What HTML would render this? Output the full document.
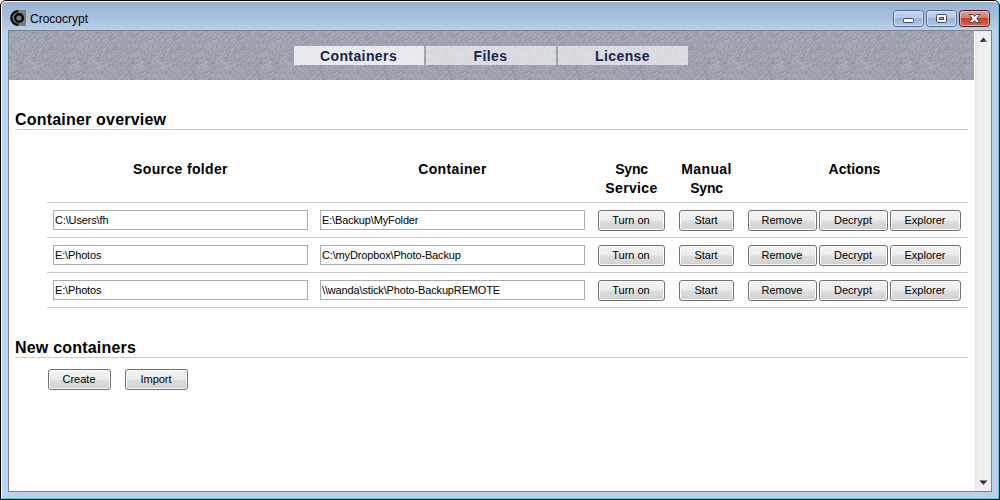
<!DOCTYPE html>
<html>
<head>
<meta charset="utf-8">
<title>Crococrypt</title>
<style>
html,body{margin:0;padding:0;}
body{width:1000px;height:500px;overflow:hidden;background:#fff;font-family:"Liberation Sans",sans-serif;position:relative;}
.abs{position:absolute;}
#frame{left:0;top:0;width:998px;height:498px;border:1px solid #000;border-radius:6px 6px 0 0;background:linear-gradient(to bottom,#98b3d1 0px,#a4bedb 14px,#b9d1ea 30px,#b9d1ea 100%);overflow:hidden;}
#frame .hl{left:0;top:0;width:996px;height:496px;border-top:1px solid #fff;border-left:1px solid #fff;border-right:1px solid #3fd6ee;border-bottom:1px solid #3fd6ee;border-radius:5px 5px 0 0;}
#title{left:30px;top:12px;font-size:12px;line-height:14px;color:#000;white-space:pre;}
#client{left:8px;top:30px;width:984px;height:462px;background:#fff;border:1px solid #7c7f8c;}
#hdr{left:9px;top:31px;width:965px;height:49px;background:#9ea1ae;}
.tab{top:46px;height:19px;width:130px;background:rgba(255,255,255,0.62);color:#14264f;font-weight:bold;font-size:14px;letter-spacing:0.4px;line-height:21px;text-align:center;text-indent:-1px;}
.tab.sel{background:rgba(255,255,255,0.78);}
h2{margin:0;font-size:16px;font-weight:bold;letter-spacing:0.2px;line-height:18px;color:#000;white-space:pre;}
.hr{height:1px;background:#c9c9c9;}
.th{font-weight:bold;font-size:14px;letter-spacing:0.35px;line-height:19px;text-align:center;color:#000;top:160px;}
.inp{height:18px;border:1px solid #a9abb3;background:#fff;font-size:11px;line-height:18px;color:#000;white-space:pre;padding-left:1px;letter-spacing:-0.15px;box-sizing:content-box;}
.btn{height:19px;border:1px solid #707070;border-radius:3px;box-shadow:inset 0 0 0 1px #fcfcfc;background:linear-gradient(to bottom,#f3f3f3 0%,#ececec 48%,#dedede 52%,#d0d0d0 100%);font-size:11px;line-height:19px;text-align:center;color:#000;white-space:pre;text-indent:-1px;}
#sb{left:974px;top:31px;width:17px;height:460px;background:linear-gradient(to right,#fdfdfd 0,#fdfdfd 1px,#e5e5e5 1px,#ececec 3px,#efefef 6px,#f0f0f0 17px);}
</style>
</head>
<body>
<div id="frame" class="abs"><div class="hl abs"></div></div>

<!-- title icon -->
<svg class="abs" style="left:10px;top:10px" width="16" height="16" viewBox="0 0 16 16">
  <rect x="7" y="0" width="9" height="16" fill="#7f7d7b"/>
  <circle cx="8" cy="8" r="7" fill="#7f7d7b"/>
  <path d="M8.2 1.1 A6.9 6.9 0 0 0 8.2 14.9" fill="none" stroke="#000" stroke-width="2.2"/>
  <circle cx="9" cy="8" r="3.8" fill="none" stroke="#000" stroke-width="2.4"/>
</svg>
<div id="title" class="abs">Crococrypt</div>

<!-- caption buttons -->
<svg class="abs" style="left:890px;top:8px" width="104" height="22" viewBox="890 8 104 22">
<defs>
<linearGradient id="gb" x1="0" y1="0" x2="0" y2="1">
<stop offset="0" stop-color="#c3d6ee"/><stop offset="0.47" stop-color="#b4cbe7"/><stop offset="0.5" stop-color="#98b5d8"/><stop offset="1" stop-color="#aecaea"/>
</linearGradient>
<linearGradient id="gr" x1="0" y1="0" x2="0" y2="1">
<stop offset="0" stop-color="#e8a494"/><stop offset="0.47" stop-color="#d8796a"/><stop offset="0.5" stop-color="#c4432d"/><stop offset="1" stop-color="#d4664e"/>
</linearGradient>
</defs>
<!-- minimize -->
<rect x="893.5" y="10.5" width="30" height="16" rx="3" fill="url(#gb)" stroke="#55688a"/>
<rect x="894.5" y="11.5" width="28" height="14" rx="2" fill="none" stroke="#dbe8f7" stroke-opacity="0.85"/>
<rect x="903.5" y="18.5" width="10" height="4" rx="1" fill="#fbfbfb" stroke="#454b5c"/>
<!-- maximize -->
<rect x="926.5" y="10.5" width="30" height="16" rx="3" fill="url(#gb)" stroke="#55688a"/>
<rect x="927.5" y="11.5" width="28" height="14" rx="2" fill="none" stroke="#dbe8f7" stroke-opacity="0.85"/>
<rect x="936.5" y="14.5" width="10" height="8" rx="1" fill="#fbfbfb" stroke="#454b5c"/>
<rect x="939.5" y="17.5" width="4" height="2" fill="#9db8d8" stroke="#454b5c"/>
<!-- close -->
<rect x="959.5" y="10.5" width="30" height="16" rx="3" fill="url(#gr)" stroke="#4b1a26"/>
<rect x="960.5" y="11.5" width="28" height="14" rx="2" fill="none" stroke="#f3c0b4" stroke-opacity="0.8"/>
<path d="M969 14.5H972.7L974.5 16.4 976.3 14.5H980L976.7 18.5 980 22.5H976.3L974.5 20.6 972.7 22.5H969L972.3 18.5z" fill="#fbfbfb" stroke="#454b5c" stroke-width="1" stroke-linejoin="round"/>
</svg>

<div id="client" class="abs" style="box-sizing:border-box"></div>
<svg class="abs" style="left:9px;top:31px" width="965" height="49"><defs><pattern id="tx" width="64" height="52" patternUnits="userSpaceOnUse"><rect width="64" height="52" fill="#9ea1ae"/><path fill="#aeb1be" d="M0 0h1v1h-1zM8 0h1v1h-1zM11 0h1v1h-1zM13 0h1v1h-1zM22 0h1v1h-1zM31 0h1v1h-1zM54 0h1v1h-1zM56 0h1v1h-1zM60 0h2v1h-2zM63 0h1v1h-1zM5 1h1v1h-1zM7 1h1v1h-1zM12 1h1v1h-1zM15 1h1v1h-1zM35 1h1v1h-1zM40 1h1v1h-1zM51 1h1v1h-1zM55 1h1v1h-1zM63 1h1v1h-1zM3 2h1v1h-1zM14 2h1v1h-1zM34 2h1v1h-1zM36 2h1v1h-1zM39 2h1v1h-1zM50 2h1v1h-1zM5 3h1v1h-1zM13 3h2v1h-2zM19 3h1v1h-1zM21 3h1v1h-1zM33 3h1v1h-1zM38 3h1v1h-1zM41 3h2v1h-2zM49 3h1v1h-1zM53 3h1v1h-1zM58 3h1v1h-1zM2 4h3v1h-3zM9 4h1v1h-1zM12 4h1v1h-1zM16 4h1v1h-1zM20 4h1v1h-1zM28 4h2v1h-2zM40 4h1v1h-1zM53 4h1v1h-1zM0 5h1v1h-1zM7 5h1v1h-1zM13 5h1v1h-1zM23 5h2v1h-2zM28 5h1v1h-1zM33 5h1v1h-1zM52 5h1v1h-1zM12 6h1v1h-1zM18 6h1v1h-1zM22 6h1v1h-1zM30 6h1v1h-1zM47 6h1v1h-1zM54 6h3v1h-3zM63 6h1v1h-1zM1 7h1v1h-1zM13 7h1v1h-1zM21 7h1v1h-1zM33 7h1v1h-1zM42 7h1v1h-1zM52 7h1v1h-1zM57 7h1v1h-1zM4 8h1v1h-1zM20 8h1v1h-1zM25 8h2v1h-2zM32 8h1v1h-1zM47 8h1v1h-1zM56 8h1v1h-1zM13 9h1v1h-1zM15 9h1v1h-1zM24 9h1v1h-1zM59 9h1v1h-1zM1 10h1v1h-1zM11 10h2v1h-2zM14 10h1v1h-1zM19 10h1v1h-1zM23 10h1v1h-1zM30 10h1v1h-1zM33 10h1v1h-1zM37 10h1v1h-1zM39 10h1v1h-1zM46 10h1v1h-1zM0 11h1v1h-1zM13 11h1v1h-1zM17 11h1v1h-1zM32 11h1v1h-1zM37 11h1v1h-1zM41 11h1v1h-1zM49 11h1v1h-1zM13 12h1v1h-1zM24 12h1v1h-1zM36 12h1v1h-1zM45 12h1v1h-1zM52 12h1v1h-1zM7 13h1v1h-1zM17 13h1v1h-1zM27 13h1v1h-1zM31 13h1v1h-1zM39 13h1v1h-1zM44 13h1v1h-1zM55 13h1v1h-1zM3 14h1v1h-1zM14 14h1v1h-1zM20 14h1v1h-1zM26 14h1v1h-1zM34 14h2v1h-2zM39 14h1v1h-1zM46 14h1v1h-1zM54 14h2v1h-2zM58 14h1v1h-1zM60 14h1v1h-1zM5 15h1v1h-1zM18 15h1v1h-1zM25 15h1v1h-1zM34 15h1v1h-1zM38 15h1v1h-1zM46 15h1v1h-1zM48 15h1v1h-1zM57 15h1v1h-1zM4 16h1v1h-1zM9 16h1v1h-1zM12 16h2v1h-2zM17 16h1v1h-1zM19 16h1v1h-1zM37 16h1v1h-1zM45 16h1v1h-1zM51 16h1v1h-1zM60 16h1v1h-1zM63 16h1v1h-1zM8 17h1v1h-1zM24 17h1v1h-1zM32 17h1v1h-1zM6 18h1v1h-1zM13 18h2v1h-2zM18 18h1v1h-1zM23 18h1v1h-1zM31 18h1v1h-1zM38 18h1v1h-1zM50 18h1v1h-1zM0 19h1v1h-1zM17 19h1v1h-1zM26 19h1v1h-1zM30 19h1v1h-1zM37 19h1v1h-1zM44 19h1v1h-1zM49 19h1v1h-1zM57 19h1v1h-1zM10 20h1v1h-1zM13 20h1v1h-1zM16 20h1v1h-1zM23 20h1v1h-1zM30 20h2v1h-2zM52 20h1v1h-1zM0 21h1v1h-1zM2 21h1v1h-1zM15 21h1v1h-1zM23 21h1v1h-1zM27 21h1v1h-1zM61 21h1v1h-1zM18 22h2v1h-2zM22 22h1v1h-1zM31 22h1v1h-1zM34 22h1v1h-1zM48 22h1v1h-1zM51 22h1v1h-1zM63 22h1v1h-1zM1 23h2v1h-2zM5 23h2v1h-2zM29 23h2v1h-2zM60 23h1v1h-1zM62 23h1v1h-1zM0 24h2v1h-2zM4 24h2v1h-2zM12 24h1v1h-1zM20 24h1v1h-1zM24 24h1v1h-1zM32 24h1v1h-1zM34 24h1v1h-1zM49 24h1v1h-1zM4 25h1v1h-1zM11 25h2v1h-2zM20 25h1v1h-1zM24 25h1v1h-1zM27 25h1v1h-1zM31 25h1v1h-1zM43 25h1v1h-1zM54 25h1v1h-1zM58 25h1v1h-1zM62 25h2v1h-2zM2 26h1v1h-1zM6 26h1v1h-1zM27 26h1v1h-1zM31 26h1v1h-1zM36 26h1v1h-1zM38 26h1v1h-1zM42 26h1v1h-1zM16 27h2v1h-2zM21 27h1v1h-1zM30 27h1v1h-1zM44 27h1v1h-1zM53 27h1v1h-1zM0 28h1v1h-1zM17 28h1v1h-1zM20 28h1v1h-1zM28 28h1v1h-1zM0 29h1v1h-1zM16 29h1v1h-1zM19 29h1v1h-1zM43 29h1v1h-1zM55 29h1v1h-1zM60 29h1v1h-1zM5 30h1v1h-1zM16 30h1v1h-1zM19 30h1v1h-1zM21 30h1v1h-1zM63 30h1v1h-1zM4 31h1v1h-1zM20 31h2v1h-2zM23 31h1v1h-1zM27 31h1v1h-1zM35 31h1v1h-1zM37 31h1v1h-1zM4 32h1v1h-1zM16 32h1v1h-1zM22 32h1v1h-1zM24 32h1v1h-1zM32 32h1v1h-1zM36 32h1v1h-1zM41 32h1v1h-1zM56 32h1v1h-1zM3 33h1v1h-1zM18 33h1v1h-1zM31 33h1v1h-1zM35 33h1v1h-1zM51 33h1v1h-1zM59 33h1v1h-1zM61 33h1v1h-1zM63 33h1v1h-1zM23 34h1v1h-1zM27 34h1v1h-1zM29 34h2v1h-2zM32 34h3v1h-3zM51 34h1v1h-1zM62 34h1v1h-1zM1 35h1v1h-1zM4 35h1v1h-1zM25 35h1v1h-1zM29 35h1v1h-1zM53 35h1v1h-1zM61 35h2v1h-2zM0 36h1v1h-1zM5 36h1v1h-1zM17 36h1v1h-1zM24 36h1v1h-1zM26 36h2v1h-2zM35 36h1v1h-1zM49 36h1v1h-1zM61 36h1v1h-1zM3 37h1v1h-1zM7 37h1v1h-1zM25 37h2v1h-2zM35 37h1v1h-1zM48 37h1v1h-1zM50 37h1v1h-1zM15 38h1v1h-1zM26 38h1v1h-1zM34 38h1v1h-1zM39 38h1v1h-1zM41 38h1v1h-1zM58 38h1v1h-1zM5 39h1v1h-1zM10 39h1v1h-1zM21 39h1v1h-1zM38 39h1v1h-1zM41 39h2v1h-2zM61 39h1v1h-1zM4 40h1v1h-1zM12 40h1v1h-1zM32 40h1v1h-1zM41 40h1v1h-1zM51 40h1v1h-1zM7 41h1v1h-1zM22 41h1v1h-1zM31 41h1v1h-1zM36 41h1v1h-1zM47 41h1v1h-1zM59 41h1v1h-1zM3 42h1v1h-1zM18 42h1v1h-1zM2 43h1v1h-1zM4 43h1v1h-1zM9 43h1v1h-1zM11 43h2v1h-2zM32 43h2v1h-2zM37 43h1v1h-1zM49 43h1v1h-1zM62 43h1v1h-1zM12 44h1v1h-1zM16 44h1v1h-1zM18 44h1v1h-1zM21 44h1v1h-1zM26 44h1v1h-1zM28 44h1v1h-1zM36 44h1v1h-1zM42 44h1v1h-1zM48 44h1v1h-1zM10 45h2v1h-2zM15 45h1v1h-1zM18 45h1v1h-1zM24 45h1v1h-1zM27 45h1v1h-1zM49 45h1v1h-1zM63 45h1v1h-1zM18 46h1v1h-1zM23 46h1v1h-1zM26 46h1v1h-1zM31 46h1v1h-1zM49 46h1v1h-1zM54 46h1v1h-1zM2 47h1v1h-1zM5 47h1v1h-1zM17 47h1v1h-1zM21 47h1v1h-1zM25 47h1v1h-1zM29 47h1v1h-1zM46 47h1v1h-1zM53 47h1v1h-1zM12 48h1v1h-1zM16 48h1v1h-1zM20 48h1v1h-1zM28 48h2v1h-2zM52 48h1v1h-1zM56 48h1v1h-1z"/><path fill="#989ba8" d="M2 0h2v1h-2zM6 0h1v1h-1zM10 0h1v1h-1zM14 0h1v1h-1zM19 0h1v1h-1zM29 0h1v1h-1zM32 0h1v1h-1zM37 0h1v1h-1zM42 0h1v1h-1zM45 0h2v1h-2zM48 0h1v1h-1zM55 0h1v1h-1zM1 1h2v1h-2zM6 1h1v1h-1zM13 1h1v1h-1zM23 1h1v1h-1zM25 1h2v1h-2zM28 1h1v1h-1zM42 1h1v1h-1zM45 1h3v1h-3zM50 1h1v1h-1zM54 1h1v1h-1zM56 1h2v1h-2zM59 1h1v1h-1zM61 1h1v1h-1zM0 2h2v1h-2zM5 2h1v1h-1zM7 2h1v1h-1zM11 2h3v1h-3zM16 2h1v1h-1zM28 2h1v1h-1zM35 2h1v1h-1zM44 2h2v1h-2zM48 2h2v1h-2zM58 2h1v1h-1zM61 2h1v1h-1zM0 3h1v1h-1zM3 3h1v1h-1zM7 3h1v1h-1zM10 3h2v1h-2zM15 3h1v1h-1zM18 3h1v1h-1zM23 3h1v1h-1zM27 3h2v1h-2zM37 3h1v1h-1zM39 3h1v1h-1zM60 3h1v1h-1zM63 3h1v1h-1zM6 4h1v1h-1zM13 4h1v1h-1zM15 4h1v1h-1zM22 4h1v1h-1zM27 4h1v1h-1zM35 4h1v1h-1zM38 4h1v1h-1zM44 4h2v1h-2zM49 4h1v1h-1zM56 4h1v1h-1zM4 5h1v1h-1zM14 5h2v1h-2zM17 5h1v1h-1zM20 5h1v1h-1zM29 5h2v1h-2zM38 5h1v1h-1zM40 5h1v1h-1zM42 5h1v1h-1zM45 5h1v1h-1zM49 5h1v1h-1zM61 5h1v1h-1zM1 6h1v1h-1zM5 6h1v1h-1zM15 6h1v1h-1zM19 6h1v1h-1zM25 6h2v1h-2zM32 6h1v1h-1zM35 6h1v1h-1zM37 6h2v1h-2zM57 6h1v1h-1zM0 7h1v1h-1zM3 7h1v1h-1zM7 7h2v1h-2zM11 7h1v1h-1zM14 7h3v1h-3zM22 7h3v1h-3zM30 7h3v1h-3zM43 7h1v1h-1zM2 8h1v1h-1zM5 8h3v1h-3zM12 8h1v1h-1zM14 8h1v1h-1zM21 8h1v1h-1zM27 8h1v1h-1zM29 8h1v1h-1zM37 8h2v1h-2zM40 8h1v1h-1zM46 8h1v1h-1zM50 8h1v1h-1zM54 8h1v1h-1zM57 8h2v1h-2zM62 8h2v1h-2zM0 9h1v1h-1zM5 9h1v1h-1zM7 9h1v1h-1zM19 9h1v1h-1zM29 9h1v1h-1zM33 9h1v1h-1zM36 9h2v1h-2zM44 9h2v1h-2zM56 9h1v1h-1zM58 9h1v1h-1zM62 9h1v1h-1zM3 10h2v1h-2zM6 10h1v1h-1zM18 10h1v1h-1zM20 10h1v1h-1zM36 10h1v1h-1zM38 10h1v1h-1zM40 10h1v1h-1zM52 10h1v1h-1zM56 10h2v1h-2zM60 10h2v1h-2zM63 10h1v1h-1zM18 11h1v1h-1zM22 11h1v1h-1zM24 11h1v1h-1zM28 11h1v1h-1zM35 11h1v1h-1zM42 11h2v1h-2zM45 11h1v1h-1zM51 11h2v1h-2zM57 11h2v1h-2zM62 11h1v1h-1zM1 12h1v1h-1zM10 12h1v1h-1zM14 12h1v1h-1zM17 12h1v1h-1zM25 12h2v1h-2zM28 12h1v1h-1zM33 12h1v1h-1zM38 12h2v1h-2zM43 12h1v1h-1zM47 12h1v1h-1zM57 12h1v1h-1zM62 12h1v1h-1zM0 13h1v1h-1zM6 13h1v1h-1zM16 13h1v1h-1zM18 13h1v1h-1zM24 13h1v1h-1zM26 13h1v1h-1zM32 13h1v1h-1zM34 13h1v1h-1zM50 13h1v1h-1zM61 13h1v1h-1zM1 14h2v1h-2zM4 14h1v1h-1zM15 14h1v1h-1zM24 14h1v1h-1zM47 14h2v1h-2zM52 14h2v1h-2zM57 14h1v1h-1zM59 14h1v1h-1zM3 15h1v1h-1zM7 15h2v1h-2zM11 15h1v1h-1zM15 15h2v1h-2zM35 15h1v1h-1zM45 15h1v1h-1zM47 15h1v1h-1zM51 15h2v1h-2zM60 15h1v1h-1zM6 16h1v1h-1zM15 16h2v1h-2zM26 16h1v1h-1zM30 16h1v1h-1zM39 16h1v1h-1zM42 16h1v1h-1zM44 16h1v1h-1zM46 16h1v1h-1zM48 16h2v1h-2zM54 16h1v1h-1zM57 16h1v1h-1zM59 16h1v1h-1zM62 16h1v1h-1zM1 17h4v1h-4zM6 17h1v1h-1zM15 17h1v1h-1zM17 17h1v1h-1zM19 17h2v1h-2zM22 17h1v1h-1zM26 17h3v1h-3zM33 17h1v1h-1zM38 17h1v1h-1zM41 17h1v1h-1zM45 17h1v1h-1zM47 17h3v1h-3zM52 17h1v1h-1zM54 17h1v1h-1zM57 17h1v1h-1zM2 18h1v1h-1zM8 18h3v1h-3zM17 18h1v1h-1zM19 18h1v1h-1zM21 18h1v1h-1zM24 18h1v1h-1zM26 18h1v1h-1zM32 18h1v1h-1zM34 18h1v1h-1zM36 18h1v1h-1zM41 18h1v1h-1zM45 18h4v1h-4zM53 18h1v1h-1zM56 18h1v1h-1zM63 18h1v1h-1zM3 19h2v1h-2zM7 19h2v1h-2zM14 19h1v1h-1zM16 19h1v1h-1zM18 19h1v1h-1zM21 19h1v1h-1zM24 19h1v1h-1zM29 19h1v1h-1zM31 19h1v1h-1zM34 19h1v1h-1zM39 19h1v1h-1zM42 19h2v1h-2zM45 19h1v1h-1zM51 19h1v1h-1zM53 19h1v1h-1zM56 19h1v1h-1zM60 19h2v1h-2zM0 20h1v1h-1zM9 20h1v1h-1zM14 20h1v1h-1zM19 20h1v1h-1zM26 20h1v1h-1zM33 20h1v1h-1zM35 20h1v1h-1zM37 20h2v1h-2zM42 20h1v1h-1zM47 20h1v1h-1zM49 20h3v1h-3zM54 20h1v1h-1zM58 20h3v1h-3zM5 21h1v1h-1zM10 21h1v1h-1zM29 21h1v1h-1zM31 21h1v1h-1zM33 21h2v1h-2zM37 21h1v1h-1zM39 21h1v1h-1zM46 21h1v1h-1zM50 21h1v1h-1zM53 21h3v1h-3zM57 21h1v1h-1zM4 22h1v1h-1zM12 22h1v1h-1zM15 22h1v1h-1zM33 22h1v1h-1zM35 22h2v1h-2zM38 22h1v1h-1zM40 22h1v1h-1zM45 22h1v1h-1zM47 22h1v1h-1zM49 22h1v1h-1zM52 22h1v1h-1zM54 22h1v1h-1zM62 22h1v1h-1zM11 23h1v1h-1zM14 23h1v1h-1zM19 23h1v1h-1zM22 23h2v1h-2zM28 23h1v1h-1zM38 23h1v1h-1zM40 23h1v1h-1zM44 23h2v1h-2zM51 23h1v1h-1zM54 23h2v1h-2zM57 23h2v1h-2zM7 24h1v1h-1zM9 24h1v1h-1zM11 24h1v1h-1zM27 24h1v1h-1zM30 24h1v1h-1zM42 24h1v1h-1zM46 24h1v1h-1zM50 24h2v1h-2zM53 24h2v1h-2zM56 24h1v1h-1zM62 24h1v1h-1zM0 25h1v1h-1zM16 25h2v1h-2zM26 25h1v1h-1zM28 25h1v1h-1zM30 25h1v1h-1zM38 25h1v1h-1zM41 25h2v1h-2zM44 25h1v1h-1zM47 25h1v1h-1zM49 25h2v1h-2zM52 25h2v1h-2zM57 25h1v1h-1zM59 25h2v1h-2zM0 26h1v1h-1zM4 26h1v1h-1zM8 26h2v1h-2zM12 26h1v1h-1zM15 26h1v1h-1zM20 26h1v1h-1zM24 26h1v1h-1zM28 26h3v1h-3zM33 26h1v1h-1zM39 26h1v1h-1zM41 26h1v1h-1zM44 26h1v1h-1zM47 26h1v1h-1zM54 26h1v1h-1zM57 26h1v1h-1zM59 26h1v1h-1zM63 26h1v1h-1zM0 27h1v1h-1zM4 27h1v1h-1zM6 27h4v1h-4zM11 27h3v1h-3zM20 27h1v1h-1zM22 27h1v1h-1zM28 27h1v1h-1zM31 27h2v1h-2zM36 27h1v1h-1zM42 27h1v1h-1zM52 27h1v1h-1zM54 27h4v1h-4zM61 27h1v1h-1zM7 28h1v1h-1zM9 28h1v1h-1zM14 28h1v1h-1zM21 28h1v1h-1zM26 28h1v1h-1zM31 28h1v1h-1zM33 28h4v1h-4zM50 28h1v1h-1zM53 28h1v1h-1zM56 28h1v1h-1zM59 28h2v1h-2zM63 28h1v1h-1zM1 29h1v1h-1zM6 29h1v1h-1zM14 29h1v1h-1zM17 29h2v1h-2zM26 29h1v1h-1zM28 29h1v1h-1zM33 29h1v1h-1zM37 29h2v1h-2zM41 29h1v1h-1zM53 29h2v1h-2zM57 29h1v1h-1zM59 29h1v1h-1zM61 29h1v1h-1zM13 30h1v1h-1zM23 30h1v1h-1zM25 30h1v1h-1zM29 30h1v1h-1zM33 30h1v1h-1zM36 30h1v1h-1zM41 30h2v1h-2zM44 30h1v1h-1zM49 30h1v1h-1zM61 30h1v1h-1zM3 31h1v1h-1zM7 31h1v1h-1zM10 31h1v1h-1zM14 31h1v1h-1zM26 31h1v1h-1zM28 31h1v1h-1zM31 31h2v1h-2zM36 31h1v1h-1zM39 31h1v1h-1zM41 31h1v1h-1zM43 31h1v1h-1zM48 31h1v1h-1zM50 31h1v1h-1zM53 31h1v1h-1zM55 31h1v1h-1zM2 32h2v1h-2zM11 32h1v1h-1zM29 32h2v1h-2zM35 32h1v1h-1zM39 32h2v1h-2zM47 32h1v1h-1zM58 32h1v1h-1zM60 32h3v1h-3zM5 33h1v1h-1zM7 33h2v1h-2zM10 33h1v1h-1zM12 33h1v1h-1zM20 33h1v1h-1zM28 33h2v1h-2zM36 33h1v1h-1zM38 33h1v1h-1zM40 33h1v1h-1zM42 33h1v1h-1zM46 33h1v1h-1zM48 33h2v1h-2zM57 33h1v1h-1zM4 34h1v1h-1zM12 34h1v1h-1zM19 34h1v1h-1zM24 34h1v1h-1zM28 34h1v1h-1zM31 34h1v1h-1zM40 34h1v1h-1zM48 34h1v1h-1zM56 34h1v1h-1zM63 34h1v1h-1zM0 35h1v1h-1zM7 35h1v1h-1zM13 35h2v1h-2zM19 35h1v1h-1zM22 35h1v1h-1zM31 35h1v1h-1zM37 35h1v1h-1zM39 35h1v1h-1zM43 35h2v1h-2zM56 35h1v1h-1zM59 35h2v1h-2zM6 36h1v1h-1zM12 36h3v1h-3zM21 36h1v1h-1zM25 36h1v1h-1zM29 36h1v1h-1zM34 36h1v1h-1zM43 36h1v1h-1zM47 36h1v1h-1zM50 36h2v1h-2zM56 36h3v1h-3zM1 37h1v1h-1zM5 37h1v1h-1zM10 37h1v1h-1zM24 37h1v1h-1zM28 37h1v1h-1zM33 37h1v1h-1zM36 37h1v1h-1zM38 37h1v1h-1zM41 37h2v1h-2zM44 37h2v1h-2zM53 37h1v1h-1zM60 37h1v1h-1zM0 38h1v1h-1zM4 38h1v1h-1zM9 38h2v1h-2zM27 38h1v1h-1zM31 38h1v1h-1zM33 38h1v1h-1zM37 38h1v1h-1zM42 38h1v1h-1zM52 38h1v1h-1zM56 38h2v1h-2zM2 39h1v1h-1zM6 39h3v1h-3zM15 39h1v1h-1zM19 39h2v1h-2zM22 39h1v1h-1zM27 39h2v1h-2zM30 39h1v1h-1zM34 39h2v1h-2zM39 39h1v1h-1zM46 39h1v1h-1zM49 39h1v1h-1zM54 39h1v1h-1zM18 40h4v1h-4zM34 40h1v1h-1zM39 40h1v1h-1zM42 40h1v1h-1zM45 40h5v1h-5zM58 40h1v1h-1zM1 41h4v1h-4zM6 41h1v1h-1zM8 41h1v1h-1zM11 41h1v1h-1zM13 41h1v1h-1zM17 41h1v1h-1zM20 41h1v1h-1zM24 41h1v1h-1zM28 41h3v1h-3zM34 41h1v1h-1zM37 41h1v1h-1zM39 41h1v1h-1zM45 41h2v1h-2zM49 41h1v1h-1zM51 41h1v1h-1zM55 41h1v1h-1zM57 41h1v1h-1zM62 41h1v1h-1zM0 42h2v1h-2zM7 42h1v1h-1zM10 42h1v1h-1zM15 42h1v1h-1zM20 42h1v1h-1zM29 42h2v1h-2zM34 42h3v1h-3zM46 42h1v1h-1zM51 42h1v1h-1zM56 42h3v1h-3zM6 43h1v1h-1zM10 43h1v1h-1zM18 43h1v1h-1zM20 43h1v1h-1zM26 43h1v1h-1zM28 43h1v1h-1zM38 43h1v1h-1zM41 43h1v1h-1zM46 43h1v1h-1zM52 43h1v1h-1zM57 43h4v1h-4zM63 43h1v1h-1zM5 44h1v1h-1zM10 44h1v1h-1zM22 44h1v1h-1zM33 44h1v1h-1zM45 44h2v1h-2zM49 44h1v1h-1zM51 44h1v1h-1zM53 44h1v1h-1zM59 44h2v1h-2zM63 44h1v1h-1zM4 45h1v1h-1zM7 45h3v1h-3zM22 45h2v1h-2zM31 45h2v1h-2zM34 45h1v1h-1zM39 45h2v1h-2zM44 45h1v1h-1zM46 45h1v1h-1zM52 45h1v1h-1zM54 45h1v1h-1zM58 45h1v1h-1zM62 45h1v1h-1zM1 46h1v1h-1zM5 46h1v1h-1zM15 46h1v1h-1zM19 46h1v1h-1zM28 46h1v1h-1zM33 46h1v1h-1zM37 46h2v1h-2zM48 46h1v1h-1zM50 46h2v1h-2zM57 46h4v1h-4zM0 47h1v1h-1zM3 47h1v1h-1zM7 47h3v1h-3zM19 47h1v1h-1zM22 47h2v1h-2zM33 47h1v1h-1zM35 47h2v1h-2zM40 47h1v1h-1zM42 47h2v1h-2zM52 47h1v1h-1zM54 47h1v1h-1zM57 47h2v1h-2zM6 48h1v1h-1zM9 48h2v1h-2zM15 48h1v1h-1zM21 48h1v1h-1zM23 48h1v1h-1zM37 48h1v1h-1zM41 48h1v1h-1zM43 48h1v1h-1zM47 48h1v1h-1zM49 48h1v1h-1zM51 48h1v1h-1zM57 48h1v1h-1zM62 48h1v1h-1z"/><path fill="#a5a8b5" d="M12 0h1v1h-1zM18 0h1v1h-1zM20 0h1v1h-1zM23 0h1v1h-1zM36 0h1v1h-1zM39 0h1v1h-1zM41 0h1v1h-1zM44 0h1v1h-1zM50 0h4v1h-4zM58 0h1v1h-1zM10 1h2v1h-2zM17 1h1v1h-1zM21 1h1v1h-1zM29 1h1v1h-1zM32 1h1v1h-1zM39 1h1v1h-1zM44 1h1v1h-1zM52 1h2v1h-2zM60 1h1v1h-1zM62 1h1v1h-1zM4 2h1v1h-1zM6 2h1v1h-1zM9 2h2v1h-2zM15 2h1v1h-1zM17 2h1v1h-1zM20 2h1v1h-1zM26 2h1v1h-1zM31 2h1v1h-1zM42 2h1v1h-1zM46 2h1v1h-1zM51 2h2v1h-2zM60 2h1v1h-1zM62 2h1v1h-1zM2 3h1v1h-1zM4 3h1v1h-1zM9 3h1v1h-1zM12 3h1v1h-1zM16 3h2v1h-2zM24 3h1v1h-1zM26 3h1v1h-1zM29 3h1v1h-1zM31 3h1v1h-1zM35 3h2v1h-2zM50 3h3v1h-3zM54 3h4v1h-4zM5 4h1v1h-1zM7 4h2v1h-2zM11 4h1v1h-1zM14 4h1v1h-1zM18 4h1v1h-1zM24 4h1v1h-1zM32 4h1v1h-1zM34 4h1v1h-1zM42 4h2v1h-2zM47 4h2v1h-2zM51 4h2v1h-2zM55 4h1v1h-1zM57 4h1v1h-1zM60 4h1v1h-1zM1 5h3v1h-3zM8 5h1v1h-1zM10 5h1v1h-1zM19 5h1v1h-1zM22 5h1v1h-1zM31 5h2v1h-2zM35 5h1v1h-1zM39 5h1v1h-1zM41 5h1v1h-1zM46 5h1v1h-1zM48 5h1v1h-1zM50 5h1v1h-1zM57 5h1v1h-1zM2 6h1v1h-1zM6 6h1v1h-1zM11 6h1v1h-1zM17 6h1v1h-1zM21 6h1v1h-1zM23 6h1v1h-1zM28 6h2v1h-2zM31 6h1v1h-1zM43 6h2v1h-2zM46 6h1v1h-1zM50 6h2v1h-2zM58 6h1v1h-1zM62 6h1v1h-1zM2 7h1v1h-1zM4 7h1v1h-1zM18 7h1v1h-1zM28 7h1v1h-1zM34 7h2v1h-2zM38 7h1v1h-1zM44 7h2v1h-2zM47 7h1v1h-1zM50 7h1v1h-1zM54 7h1v1h-1zM1 8h1v1h-1zM3 8h1v1h-1zM8 8h1v1h-1zM11 8h1v1h-1zM15 8h2v1h-2zM18 8h1v1h-1zM33 8h2v1h-2zM41 8h1v1h-1zM49 8h1v1h-1zM51 8h1v1h-1zM53 8h1v1h-1zM55 8h1v1h-1zM60 8h2v1h-2zM2 9h1v1h-1zM6 9h1v1h-1zM8 9h1v1h-1zM12 9h1v1h-1zM14 9h1v1h-1zM16 9h1v1h-1zM18 9h1v1h-1zM20 9h1v1h-1zM25 9h1v1h-1zM27 9h1v1h-1zM30 9h2v1h-2zM35 9h1v1h-1zM39 9h2v1h-2zM42 9h2v1h-2zM48 9h2v1h-2zM51 9h1v1h-1zM55 9h1v1h-1zM60 9h1v1h-1zM10 10h1v1h-1zM15 10h1v1h-1zM17 10h1v1h-1zM21 10h1v1h-1zM26 10h1v1h-1zM29 10h1v1h-1zM31 10h1v1h-1zM34 10h2v1h-2zM42 10h1v1h-1zM50 10h2v1h-2zM55 10h1v1h-1zM58 10h2v1h-2zM7 11h1v1h-1zM10 11h1v1h-1zM14 11h1v1h-1zM16 11h1v1h-1zM20 11h1v1h-1zM23 11h1v1h-1zM26 11h1v1h-1zM33 11h1v1h-1zM38 11h1v1h-1zM46 11h2v1h-2zM53 11h1v1h-1zM61 11h1v1h-1zM0 12h1v1h-1zM3 12h2v1h-2zM8 12h1v1h-1zM12 12h1v1h-1zM16 12h1v1h-1zM20 12h1v1h-1zM31 12h1v1h-1zM34 12h1v1h-1zM37 12h1v1h-1zM48 12h1v1h-1zM53 12h1v1h-1zM56 12h1v1h-1zM59 12h1v1h-1zM61 12h1v1h-1zM63 12h1v1h-1zM3 13h2v1h-2zM8 13h1v1h-1zM12 13h1v1h-1zM15 13h1v1h-1zM35 13h2v1h-2zM43 13h1v1h-1zM46 13h2v1h-2zM51 13h2v1h-2zM56 13h1v1h-1zM59 13h1v1h-1zM63 13h1v1h-1zM0 14h1v1h-1zM6 14h5v1h-5zM18 14h1v1h-1zM23 14h1v1h-1zM25 14h1v1h-1zM27 14h1v1h-1zM49 14h2v1h-2zM61 14h3v1h-3zM0 15h1v1h-1zM2 15h1v1h-1zM9 15h2v1h-2zM14 15h1v1h-1zM17 15h1v1h-1zM21 15h1v1h-1zM30 15h1v1h-1zM33 15h1v1h-1zM41 15h1v1h-1zM50 15h1v1h-1zM53 15h3v1h-3zM61 15h1v1h-1zM1 16h1v1h-1zM8 16h1v1h-1zM24 16h1v1h-1zM33 16h1v1h-1zM35 16h1v1h-1zM47 16h1v1h-1zM53 16h1v1h-1zM55 16h1v1h-1zM61 16h1v1h-1zM5 17h1v1h-1zM7 17h1v1h-1zM11 17h2v1h-2zM16 17h1v1h-1zM21 17h1v1h-1zM23 17h1v1h-1zM31 17h1v1h-1zM36 17h1v1h-1zM40 17h1v1h-1zM43 17h1v1h-1zM50 17h1v1h-1zM59 17h2v1h-2zM1 18h1v1h-1zM7 18h1v1h-1zM11 18h1v1h-1zM22 18h1v1h-1zM27 18h2v1h-2zM42 18h1v1h-1zM55 18h1v1h-1zM62 18h1v1h-1zM5 19h1v1h-1zM9 19h1v1h-1zM12 19h1v1h-1zM22 19h1v1h-1zM25 19h1v1h-1zM32 19h1v1h-1zM41 19h1v1h-1zM47 19h2v1h-2zM59 19h1v1h-1zM3 20h1v1h-1zM8 20h1v1h-1zM21 20h1v1h-1zM25 20h1v1h-1zM28 20h1v1h-1zM32 20h1v1h-1zM39 20h1v1h-1zM45 20h1v1h-1zM48 20h1v1h-1zM1 21h1v1h-1zM6 21h1v1h-1zM9 21h1v1h-1zM13 21h2v1h-2zM22 21h1v1h-1zM35 21h1v1h-1zM40 21h1v1h-1zM42 21h1v1h-1zM44 21h1v1h-1zM47 21h1v1h-1zM49 21h1v1h-1zM51 21h2v1h-2zM1 22h2v1h-2zM5 22h1v1h-1zM10 22h1v1h-1zM13 22h1v1h-1zM21 22h1v1h-1zM25 22h1v1h-1zM30 22h1v1h-1zM39 22h1v1h-1zM42 22h2v1h-2zM46 22h1v1h-1zM57 22h2v1h-2zM61 22h1v1h-1zM3 23h1v1h-1zM13 23h1v1h-1zM17 23h1v1h-1zM21 23h1v1h-1zM24 23h1v1h-1zM32 23h1v1h-1zM35 23h3v1h-3zM39 23h1v1h-1zM41 23h2v1h-2zM49 23h2v1h-2zM53 23h1v1h-1zM56 23h1v1h-1zM59 23h1v1h-1zM63 23h1v1h-1zM8 24h1v1h-1zM13 24h1v1h-1zM21 24h1v1h-1zM28 24h1v1h-1zM31 24h1v1h-1zM35 24h2v1h-2zM38 24h1v1h-1zM41 24h1v1h-1zM47 24h2v1h-2zM55 24h1v1h-1zM58 24h2v1h-2zM61 24h1v1h-1zM7 25h2v1h-2zM15 25h1v1h-1zM19 25h1v1h-1zM21 25h1v1h-1zM29 25h1v1h-1zM35 25h2v1h-2zM39 25h1v1h-1zM46 25h1v1h-1zM51 25h1v1h-1zM3 26h1v1h-1zM7 26h1v1h-1zM10 26h2v1h-2zM17 26h3v1h-3zM22 26h1v1h-1zM34 26h2v1h-2zM50 26h1v1h-1zM53 26h1v1h-1zM60 26h1v1h-1zM62 26h1v1h-1zM3 27h1v1h-1zM5 27h1v1h-1zM26 27h1v1h-1zM29 27h1v1h-1zM33 27h1v1h-1zM45 27h1v1h-1zM48 27h1v1h-1zM11 28h1v1h-1zM27 28h1v1h-1zM40 28h2v1h-2zM44 28h1v1h-1zM47 28h2v1h-2zM51 28h2v1h-2zM55 28h1v1h-1zM57 28h2v1h-2zM62 28h1v1h-1zM3 29h1v1h-1zM9 29h3v1h-3zM20 29h1v1h-1zM22 29h2v1h-2zM27 29h1v1h-1zM32 29h1v1h-1zM39 29h2v1h-2zM46 29h2v1h-2zM50 29h1v1h-1zM52 29h1v1h-1zM58 29h1v1h-1zM63 29h1v1h-1zM2 30h1v1h-1zM4 30h1v1h-1zM6 30h1v1h-1zM8 30h3v1h-3zM14 30h2v1h-2zM18 30h1v1h-1zM24 30h1v1h-1zM30 30h2v1h-2zM34 30h1v1h-1zM39 30h2v1h-2zM45 30h1v1h-1zM53 30h1v1h-1zM55 30h1v1h-1zM58 30h1v1h-1zM62 30h1v1h-1zM0 31h1v1h-1zM2 31h1v1h-1zM6 31h1v1h-1zM8 31h1v1h-1zM15 31h1v1h-1zM18 31h1v1h-1zM25 31h1v1h-1zM29 31h2v1h-2zM38 31h1v1h-1zM42 31h1v1h-1zM45 31h1v1h-1zM49 31h1v1h-1zM54 31h1v1h-1zM57 31h1v1h-1zM5 32h1v1h-1zM15 32h1v1h-1zM19 32h2v1h-2zM23 32h1v1h-1zM28 32h1v1h-1zM33 32h1v1h-1zM37 32h1v1h-1zM43 32h1v1h-1zM52 32h1v1h-1zM54 32h2v1h-2zM1 33h1v1h-1zM4 33h1v1h-1zM14 33h2v1h-2zM19 33h1v1h-1zM23 33h1v1h-1zM26 33h2v1h-2zM33 33h1v1h-1zM44 33h1v1h-1zM50 33h1v1h-1zM52 33h1v1h-1zM0 34h3v1h-3zM6 34h2v1h-2zM10 34h2v1h-2zM13 34h1v1h-1zM17 34h2v1h-2zM20 34h1v1h-1zM22 34h1v1h-1zM25 34h2v1h-2zM38 34h1v1h-1zM42 34h2v1h-2zM46 34h2v1h-2zM54 34h1v1h-1zM58 34h2v1h-2zM2 35h1v1h-1zM5 35h2v1h-2zM10 35h1v1h-1zM17 35h1v1h-1zM24 35h1v1h-1zM26 35h1v1h-1zM28 35h1v1h-1zM30 35h1v1h-1zM32 35h1v1h-1zM41 35h1v1h-1zM46 35h1v1h-1zM49 35h1v1h-1zM54 35h1v1h-1zM57 35h2v1h-2zM63 35h1v1h-1zM1 36h1v1h-1zM9 36h1v1h-1zM11 36h1v1h-1zM22 36h2v1h-2zM38 36h1v1h-1zM44 36h1v1h-1zM48 36h1v1h-1zM52 36h2v1h-2zM60 36h1v1h-1zM62 36h1v1h-1zM0 37h1v1h-1zM2 37h1v1h-1zM6 37h1v1h-1zM12 37h1v1h-1zM15 37h2v1h-2zM19 37h1v1h-1zM22 37h1v1h-1zM27 37h1v1h-1zM29 37h2v1h-2zM32 37h1v1h-1zM34 37h1v1h-1zM37 37h1v1h-1zM40 37h1v1h-1zM46 37h1v1h-1zM51 37h1v1h-1zM58 37h1v1h-1zM62 37h1v1h-1zM1 38h2v1h-2zM5 38h4v1h-4zM11 38h1v1h-1zM17 38h6v1h-6zM24 38h2v1h-2zM29 38h2v1h-2zM36 38h1v1h-1zM38 38h1v1h-1zM50 38h1v1h-1zM53 38h1v1h-1zM60 38h3v1h-3zM0 39h1v1h-1zM3 39h1v1h-1zM14 39h1v1h-1zM16 39h3v1h-3zM26 39h1v1h-1zM29 39h1v1h-1zM32 39h2v1h-2zM36 39h2v1h-2zM40 39h1v1h-1zM44 39h1v1h-1zM51 39h3v1h-3zM57 39h2v1h-2zM0 40h3v1h-3zM8 40h1v1h-1zM13 40h1v1h-1zM16 40h1v1h-1zM23 40h1v1h-1zM26 40h1v1h-1zM31 40h1v1h-1zM36 40h2v1h-2zM40 40h1v1h-1zM43 40h1v1h-1zM50 40h1v1h-1zM52 40h1v1h-1zM54 40h1v1h-1zM60 40h1v1h-1zM62 40h2v1h-2zM0 41h1v1h-1zM12 41h1v1h-1zM16 41h1v1h-1zM19 41h1v1h-1zM23 41h1v1h-1zM27 41h1v1h-1zM40 41h1v1h-1zM43 41h1v1h-1zM50 41h1v1h-1zM54 41h1v1h-1zM60 41h1v1h-1zM5 42h2v1h-2zM13 42h2v1h-2zM16 42h1v1h-1zM21 42h1v1h-1zM25 42h2v1h-2zM31 42h1v1h-1zM33 42h1v1h-1zM38 42h1v1h-1zM40 42h1v1h-1zM54 42h1v1h-1zM59 42h1v1h-1zM62 42h2v1h-2zM1 43h1v1h-1zM7 43h1v1h-1zM17 43h1v1h-1zM21 43h5v1h-5zM42 43h1v1h-1zM44 43h1v1h-1zM61 43h1v1h-1zM0 44h1v1h-1zM4 44h1v1h-1zM8 44h1v1h-1zM11 44h1v1h-1zM13 44h1v1h-1zM20 44h1v1h-1zM29 44h3v1h-3zM34 44h1v1h-1zM38 44h4v1h-4zM50 44h1v1h-1zM52 44h1v1h-1zM55 44h1v1h-1zM61 44h1v1h-1zM0 45h1v1h-1zM13 45h1v1h-1zM17 45h1v1h-1zM19 45h2v1h-2zM25 45h1v1h-1zM35 45h1v1h-1zM38 45h1v1h-1zM42 45h1v1h-1zM47 45h1v1h-1zM50 45h1v1h-1zM56 45h1v1h-1zM59 45h1v1h-1zM61 45h1v1h-1zM3 46h1v1h-1zM7 46h1v1h-1zM13 46h1v1h-1zM17 46h1v1h-1zM29 46h2v1h-2zM34 46h2v1h-2zM46 46h2v1h-2zM63 46h1v1h-1zM1 47h1v1h-1zM6 47h1v1h-1zM10 47h1v1h-1zM12 47h2v1h-2zM15 47h1v1h-1zM28 47h1v1h-1zM30 47h1v1h-1zM34 47h1v1h-1zM39 47h1v1h-1zM41 47h1v1h-1zM44 47h1v1h-1zM51 47h1v1h-1zM55 47h2v1h-2zM3 48h1v1h-1zM13 48h1v1h-1zM19 48h1v1h-1zM24 48h1v1h-1zM27 48h1v1h-1zM32 48h2v1h-2zM36 48h1v1h-1zM40 48h1v1h-1zM44 48h1v1h-1zM46 48h1v1h-1zM60 48h2v1h-2zM63 48h1v1h-1z"/><path fill="#9194a1" d="M17 0h1v1h-1zM34 0h2v1h-2zM40 0h1v1h-1zM43 0h1v1h-1zM57 0h1v1h-1zM59 0h1v1h-1zM62 0h1v1h-1zM14 1h1v1h-1zM16 1h1v1h-1zM24 1h1v1h-1zM33 1h2v1h-2zM37 1h1v1h-1zM58 1h1v1h-1zM24 2h1v1h-1zM32 2h1v1h-1zM40 2h1v1h-1zM47 2h1v1h-1zM56 2h2v1h-2zM63 2h1v1h-1zM34 3h1v1h-1zM47 3h1v1h-1zM59 3h1v1h-1zM62 3h1v1h-1zM10 4h1v1h-1zM21 4h1v1h-1zM39 4h1v1h-1zM46 4h1v1h-1zM58 4h2v1h-2zM61 4h1v1h-1zM63 4h1v1h-1zM5 5h1v1h-1zM21 5h1v1h-1zM25 5h1v1h-1zM27 5h1v1h-1zM36 5h2v1h-2zM53 5h1v1h-1zM58 5h1v1h-1zM60 5h1v1h-1zM62 5h1v1h-1zM0 6h1v1h-1zM4 6h1v1h-1zM8 6h1v1h-1zM20 6h1v1h-1zM24 6h1v1h-1zM41 6h1v1h-1zM48 6h1v1h-1zM52 6h1v1h-1zM60 6h1v1h-1zM37 7h1v1h-1zM40 7h1v1h-1zM51 7h1v1h-1zM63 7h1v1h-1zM10 8h1v1h-1zM13 8h1v1h-1zM22 8h1v1h-1zM36 8h1v1h-1zM39 8h1v1h-1zM45 8h1v1h-1zM48 8h1v1h-1zM9 9h1v1h-1zM17 9h1v1h-1zM28 9h1v1h-1zM57 9h1v1h-1zM2 10h1v1h-1zM9 10h1v1h-1zM16 10h1v1h-1zM28 10h1v1h-1zM41 10h1v1h-1zM49 10h1v1h-1zM53 10h1v1h-1zM62 10h1v1h-1zM15 11h1v1h-1zM27 11h1v1h-1zM39 11h2v1h-2zM48 11h1v1h-1zM56 11h1v1h-1zM2 12h1v1h-1zM30 12h1v1h-1zM35 12h1v1h-1zM41 12h1v1h-1zM50 12h1v1h-1zM54 12h2v1h-2zM13 13h1v1h-1zM25 13h1v1h-1zM33 13h1v1h-1zM37 13h1v1h-1zM40 13h1v1h-1zM42 13h1v1h-1zM53 13h1v1h-1zM57 13h1v1h-1zM16 14h1v1h-1zM32 14h1v1h-1zM40 14h1v1h-1zM42 14h1v1h-1zM56 14h1v1h-1zM1 15h1v1h-1zM24 15h1v1h-1zM27 15h1v1h-1zM29 15h1v1h-1zM39 15h1v1h-1zM42 15h1v1h-1zM44 15h1v1h-1zM11 16h1v1h-1zM18 16h1v1h-1zM20 16h1v1h-1zM23 16h1v1h-1zM34 16h1v1h-1zM38 16h1v1h-1zM43 16h1v1h-1zM58 16h1v1h-1zM9 17h1v1h-1zM37 17h1v1h-1zM42 17h1v1h-1zM53 17h1v1h-1zM58 17h1v1h-1zM0 18h1v1h-1zM3 18h1v1h-1zM5 18h1v1h-1zM15 18h1v1h-1zM25 18h1v1h-1zM39 18h2v1h-2zM43 18h2v1h-2zM61 18h1v1h-1zM23 19h1v1h-1zM28 19h1v1h-1zM35 19h1v1h-1zM38 19h1v1h-1zM50 19h1v1h-1zM52 19h1v1h-1zM58 19h1v1h-1zM62 19h2v1h-2zM5 20h1v1h-1zM7 20h1v1h-1zM11 20h1v1h-1zM15 20h1v1h-1zM17 20h2v1h-2zM22 20h1v1h-1zM34 20h1v1h-1zM55 20h1v1h-1zM4 21h1v1h-1zM7 21h1v1h-1zM17 21h1v1h-1zM21 21h1v1h-1zM28 21h1v1h-1zM36 21h1v1h-1zM41 21h1v1h-1zM45 21h1v1h-1zM8 22h1v1h-1zM14 22h1v1h-1zM16 22h1v1h-1zM20 22h1v1h-1zM24 22h1v1h-1zM27 22h1v1h-1zM53 22h1v1h-1zM7 23h1v1h-1zM16 23h1v1h-1zM26 23h1v1h-1zM31 23h1v1h-1zM34 23h1v1h-1zM47 23h1v1h-1zM2 24h1v1h-1zM6 24h1v1h-1zM15 24h3v1h-3zM19 24h1v1h-1zM26 24h1v1h-1zM33 24h1v1h-1zM43 24h1v1h-1zM1 25h1v1h-1zM5 25h1v1h-1zM10 25h1v1h-1zM13 25h1v1h-1zM25 25h1v1h-1zM33 25h1v1h-1zM1 26h1v1h-1zM13 26h1v1h-1zM16 26h1v1h-1zM21 26h1v1h-1zM25 26h1v1h-1zM32 26h1v1h-1zM37 26h1v1h-1zM40 26h1v1h-1zM43 26h1v1h-1zM52 26h1v1h-1zM55 26h1v1h-1zM15 27h1v1h-1zM23 27h1v1h-1zM25 27h1v1h-1zM27 27h1v1h-1zM35 27h1v1h-1zM37 27h1v1h-1zM39 27h1v1h-1zM47 27h1v1h-1zM60 27h1v1h-1zM62 27h2v1h-2zM6 28h1v1h-1zM8 28h1v1h-1zM18 28h1v1h-1zM22 28h1v1h-1zM30 28h1v1h-1zM38 28h1v1h-1zM42 28h1v1h-1zM46 28h1v1h-1zM25 29h1v1h-1zM29 29h1v1h-1zM49 29h1v1h-1zM0 30h1v1h-1zM11 30h2v1h-2zM17 30h1v1h-1zM32 30h1v1h-1zM37 30h1v1h-1zM48 30h1v1h-1zM56 30h1v1h-1zM59 30h2v1h-2zM11 31h1v1h-1zM40 31h1v1h-1zM47 31h1v1h-1zM51 31h1v1h-1zM56 31h1v1h-1zM58 31h3v1h-3zM63 31h1v1h-1zM10 32h1v1h-1zM12 32h2v1h-2zM21 32h1v1h-1zM49 32h2v1h-2zM53 32h1v1h-1zM57 32h1v1h-1zM63 32h1v1h-1zM9 33h1v1h-1zM16 33h2v1h-2zM56 33h1v1h-1zM62 33h1v1h-1zM16 34h1v1h-1zM36 34h2v1h-2zM39 34h1v1h-1zM41 34h1v1h-1zM44 34h1v1h-1zM52 34h1v1h-1zM55 34h1v1h-1zM57 34h1v1h-1zM61 34h1v1h-1zM11 35h1v1h-1zM35 35h2v1h-2zM40 35h1v1h-1zM47 35h2v1h-2zM51 35h2v1h-2zM55 35h1v1h-1zM18 36h1v1h-1zM30 36h1v1h-1zM46 36h1v1h-1zM54 36h1v1h-1zM13 37h1v1h-1zM17 37h1v1h-1zM49 37h1v1h-1zM56 37h1v1h-1zM16 38h1v1h-1zM28 38h1v1h-1zM32 38h1v1h-1zM40 38h1v1h-1zM44 38h1v1h-1zM51 38h1v1h-1zM31 39h1v1h-1zM43 39h1v1h-1zM47 39h1v1h-1zM50 39h1v1h-1zM56 39h1v1h-1zM63 39h1v1h-1zM5 40h3v1h-3zM10 40h2v1h-2zM30 40h1v1h-1zM33 40h1v1h-1zM55 40h2v1h-2zM59 40h1v1h-1zM5 41h1v1h-1zM10 41h1v1h-1zM25 41h1v1h-1zM38 41h1v1h-1zM58 41h1v1h-1zM2 42h1v1h-1zM4 42h1v1h-1zM9 42h1v1h-1zM19 42h1v1h-1zM27 42h2v1h-2zM32 42h1v1h-1zM44 42h1v1h-1zM48 42h1v1h-1zM61 42h1v1h-1zM3 43h1v1h-1zM8 43h1v1h-1zM19 43h1v1h-1zM31 43h1v1h-1zM34 43h1v1h-1zM50 43h1v1h-1zM54 43h2v1h-2zM27 44h1v1h-1zM47 44h1v1h-1zM58 44h1v1h-1zM62 44h1v1h-1zM2 45h1v1h-1zM5 45h1v1h-1zM21 45h1v1h-1zM57 45h1v1h-1zM4 46h1v1h-1zM12 46h1v1h-1zM36 46h1v1h-1zM43 46h1v1h-1zM53 46h1v1h-1zM61 46h2v1h-2zM11 47h1v1h-1zM18 47h1v1h-1zM27 47h1v1h-1zM50 47h1v1h-1zM59 47h1v1h-1zM2 48h1v1h-1zM7 48h2v1h-2zM14 48h1v1h-1zM17 48h2v1h-2zM26 48h1v1h-1zM30 48h1v1h-1zM38 48h1v1h-1zM53 48h2v1h-2zM58 48h1v1h-1z"/></pattern></defs><rect width="965" height="49" fill="url(#tx)"/></svg>
<div id="sb" class="abs"></div>
<svg class="abs" style="left:974px;top:31px" width="17" height="460" viewBox="974 31 17 460">
<defs><linearGradient id="ga" x1="0" y1="0" x2="1" y2="1"><stop offset="0" stop-color="#111"/><stop offset="0.5" stop-color="#333"/><stop offset="1" stop-color="#999"/></linearGradient></defs>
<path d="M983.5 37.5L987.5 42H979.5z" fill="url(#ga)"/>
<path d="M979.5 480.5H987.5L983.5 485z" fill="url(#ga)"/>
</svg>

<div class="tab sel abs" style="left:294px">Containers</div>
<div class="tab abs" style="left:426px">Files</div>
<div class="tab abs" style="left:558px">License</div>

<h2 class="abs" style="left:15px;top:111px">Container overview</h2>
<div class="hr abs" style="left:15px;top:129px;width:953px"></div>

<div class="th abs" style="left:53px;width:255px">Source folder</div>
<div class="th abs" style="left:320px;width:265px">Container</div>
<div class="th abs" style="left:598px;width:67px"><span style="letter-spacing:-0.2px">Sync</span><br>Service</div>
<div class="th abs" style="left:679px;width:55px">Manual<br><span style="letter-spacing:-0.2px">Sync</span></div>
<div class="th abs" style="left:748px;width:213px;letter-spacing:0.1px">Actions</div>

<div class="hr abs" style="left:47px;top:202px;width:921px"></div>
<div class="hr abs" style="left:47px;top:237px;width:921px"></div>
<div class="hr abs" style="left:47px;top:272px;width:921px"></div>
<div class="hr abs" style="left:47px;top:307px;width:921px"></div>

<!-- row 1 -->
<div class="inp abs" style="left:53px;top:210px;width:252px">C:\Users\fh</div>
<div class="inp abs" style="left:320px;top:210px;width:262px">E:\Backup\MyFolder</div>
<div class="btn abs" style="left:598px;top:210px;width:65px">Turn on</div>
<div class="btn abs" style="left:679px;top:210px;width:53px">Start</div>
<div class="btn abs" style="left:748px;top:210px;width:67px">Remove</div>
<div class="btn abs" style="left:819px;top:210px;width:67px">Decrypt</div>
<div class="btn abs" style="left:890px;top:210px;width:69px">Explorer</div>
<!-- row 2 -->
<div class="inp abs" style="left:53px;top:245px;width:252px">E:\Photos</div>
<div class="inp abs" style="left:320px;top:245px;width:262px">C:\myDropbox\Photo-Backup</div>
<div class="btn abs" style="left:598px;top:245px;width:65px">Turn on</div>
<div class="btn abs" style="left:679px;top:245px;width:53px">Start</div>
<div class="btn abs" style="left:748px;top:245px;width:67px">Remove</div>
<div class="btn abs" style="left:819px;top:245px;width:67px">Decrypt</div>
<div class="btn abs" style="left:890px;top:245px;width:69px">Explorer</div>
<!-- row 3 -->
<div class="inp abs" style="left:53px;top:280px;width:252px">E:\Photos</div>
<div class="inp abs" style="left:320px;top:280px;width:262px">\\wanda\stick\Photo-BackupREMOTE</div>
<div class="btn abs" style="left:598px;top:280px;width:65px">Turn on</div>
<div class="btn abs" style="left:679px;top:280px;width:53px">Start</div>
<div class="btn abs" style="left:748px;top:280px;width:67px">Remove</div>
<div class="btn abs" style="left:819px;top:280px;width:67px">Decrypt</div>
<div class="btn abs" style="left:890px;top:280px;width:69px">Explorer</div>

<h2 class="abs" style="left:15px;top:339px">New containers</h2>
<div class="hr abs" style="left:15px;top:357px;width:953px"></div>
<div class="btn abs" style="left:48px;top:369px;width:61px">Create</div>
<div class="btn abs" style="left:125px;top:369px;width:61px">Import</div>
</body>
</html>
